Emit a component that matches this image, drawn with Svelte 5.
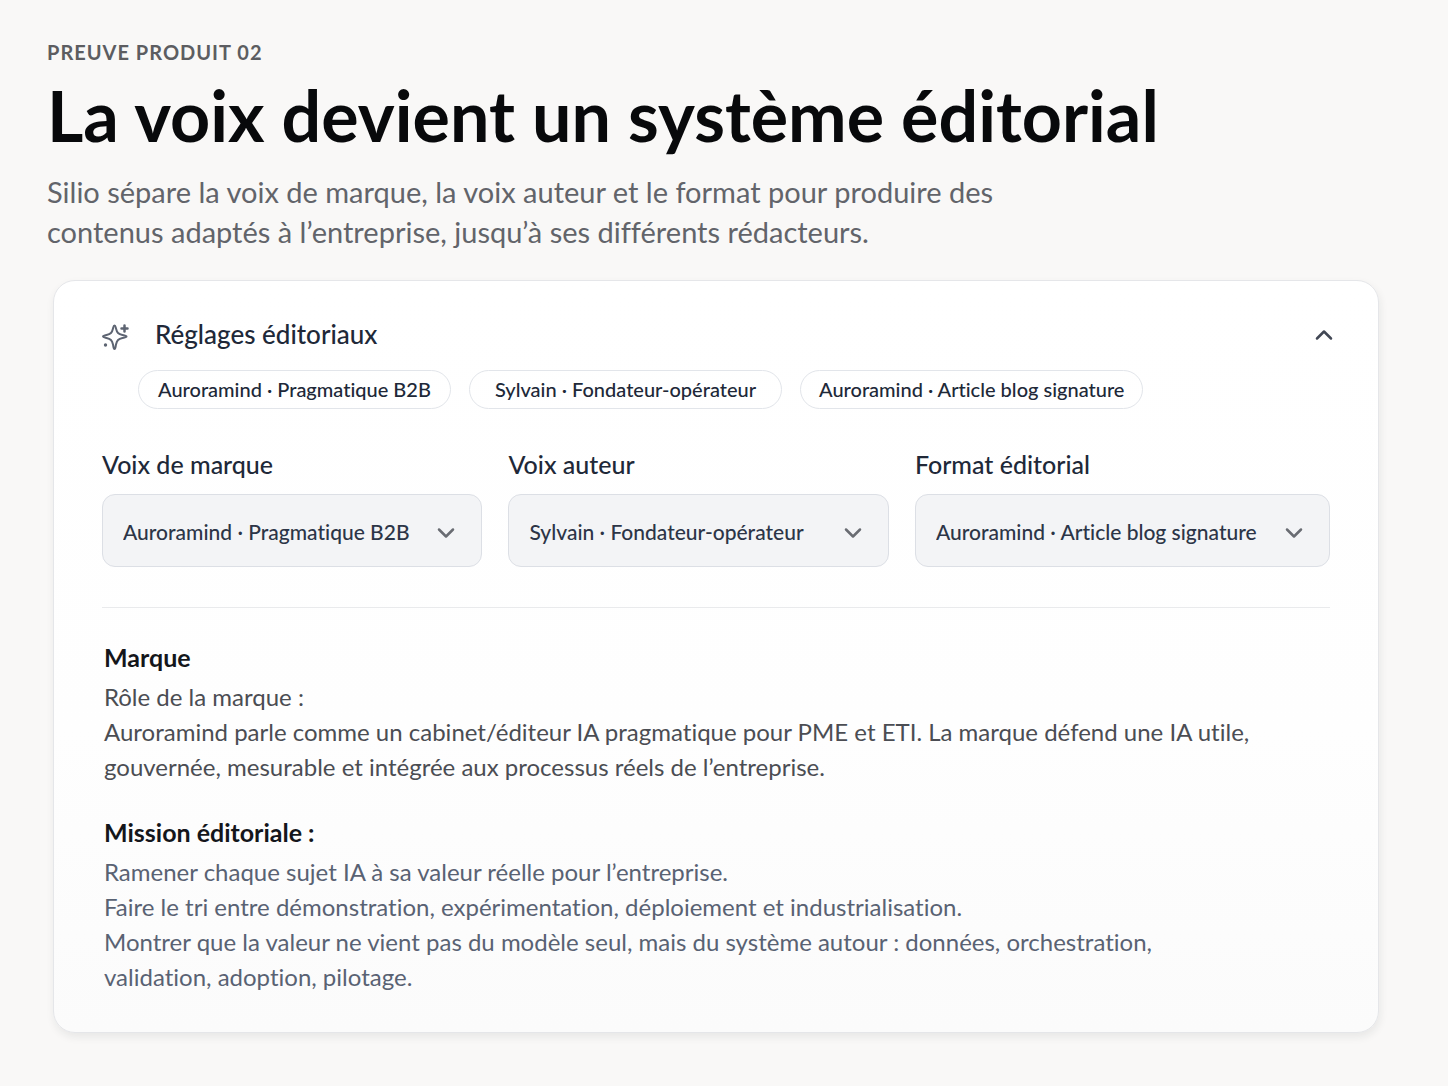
<script>
  let open = $state(true);

  const fields = [
    { id: 'brand', label: 'Voix de marque', value: 'Auroramind · Pragmatique B2B' },
    { id: 'author', label: 'Voix auteur', value: 'Sylvain · Fondateur-opérateur' },
    { id: 'format', label: 'Format éditorial', value: 'Auroramind · Article blog signature' },
  ];
</script>

<main class="page">
  <header class="intro">
    <p class="eyebrow">PREUVE PRODUIT 02</p>
    <h1>La voix devient un système éditorial</h1>
    <p class="lead">
      Silio sépare la voix de marque, la voix auteur et le format pour produire des
      contenus adaptés à l’entreprise, jusqu’à ses différents rédacteurs.
    </p>
  </header>

  <section class="card">
    <div class="card-header">
      <svg class="sparkle" viewBox="0 0 28 32" aria-hidden="true">
        <path class="star" d="M12.500 7.500c1 0 1.100 1.400 1.500 3 1 4.300 2.300 5.500 6.500 6.500 1.800.4 4 .6 4 1.500s-2.200 1.100-4 1.500c-4.200 1-5.500 2.200-6.500 6.500-.4 1.700-.5 4.500-1.500 4.500s-1.100-2.800-1.500-4.500c-1-4.300-2.300-5.500-6.500-6.500-1.600-.4-3.500-.6-3.500-1.500s1.900-1.100 3.500-1.500c4.200-1 5.500-2.200 6.500-6.500.4-1.600.5-3 1.500-3z" />
        <path class="plus" d="M22.500 7.500v6M19.500 10.500h6" />
        <circle cx="3.500" cy="27" r="1.700" />
      </svg>
      <h2>Réglages éditoriaux</h2>
      <button class="toggle" type="button" aria-label="Réglages éditoriaux" aria-expanded={open} onclick={() => (open = !open)}>
        <svg class:closed={!open} viewBox="0 0 20 20" aria-hidden="true"><path d="M3 14.500l7-7 7 7" /></svg>
      </button>
    </div>

    <ul class="chips">
      {#each fields as field}
        <li>{field.value}</li>
      {/each}
    </ul>

    {#if open}
      <div class="fields">
        {#each fields as field}
          <div class="field">
            <label for={field.id}>{field.label}</label>
            <div class="select-wrap">
              <select id={field.id}>
                <option>{field.value}</option>
              </select>
              <svg viewBox="0 0 20 20" aria-hidden="true"><path d="M3 8.500l7 7 7-7" /></svg>
            </div>
          </div>
        {/each}
      </div>

      <div class="details">
        <h3>Marque</h3>
        <p>
          Rôle de la marque :<br />
          Auroramind parle comme un cabinet/éditeur IA pragmatique pour PME et ETI. La marque défend une IA utile,
          gouvernée, mesurable et intégrée aux processus réels de l’entreprise.
        </p>

        <h3>Mission éditoriale :</h3>
        <p class="mission">
          Ramener chaque sujet IA à sa valeur réelle pour l’entreprise.<br />
          Faire le tri entre démonstration, expérimentation, déploiement et industrialisation.<br />
          Montrer que la valeur ne vient pas du modèle seul, mais du système autour : données, orchestration,
          validation, adoption, pilotage.
        </p>
      </div>
    {/if}
  </section>
</main>

<style>
  :global(body) {
    margin: 0;
    background: #f9f8f7;
  }

  .page {
    padding: 40px 69px 53px 47px;
    font-family: Lato, "Open Sans", sans-serif;
    font-variant-ligatures: none;
    color: #202838;
  }

  h1,
  h2,
  h3,
  p {
    margin: 0;
  }

  .eyebrow {
    font-size: 20px;
    font-weight: 700;
    line-height: 24px;
    letter-spacing: 1px;
    color: #5c5d61;
  }

  h1 {
    margin-top: 11px;
    font-size: 70px;
    font-weight: 700;
    line-height: 80px;
    color: #08090b;
  }

  .lead {
    max-width: 1000px;
    margin-top: 17px;
    font-size: 29px;
    line-height: 40px;
    color: #62646a;
  }

  .card {
    margin: 28px 0 0 6px;
    padding: 35px 48px 38px;
    border: 1px solid #e5e6e9;
    border-radius: 22px;
    background: linear-gradient(#fff 0%, #fefefe 60%, #fbfbfb 100%);
    box-shadow: 1px 4px 8px rgba(30, 32, 40, 0.08);
  }

  .card-header {
    display: flex;
    align-items: center;
  }

  .sparkle {
    width: 28px;
    height: 32px;
    margin-right: 25px;
    fill: #5d6472;
  }

  .sparkle path {
    fill: none;
    stroke: #5d6472;
    stroke-width: 2;
    stroke-linecap: round;
    stroke-linejoin: round;
  }

  .sparkle .plus {
    stroke-width: 2.5;
  }

  h2 {
    font-size: 26px;
    font-weight: 500;
    line-height: 36px;
  }

  .toggle {
    display: flex;
    margin-left: auto;
    padding: 0;
    border: 0;
    background: none;
    cursor: pointer;
  }

  .toggle svg,
  .select-wrap svg {
    width: 20px;
    height: 20px;
    margin-right: -4px;
    fill: none;
    stroke: #414754;
    stroke-width: 2.5;
    stroke-linecap: round;
    stroke-linejoin: round;
  }

  .toggle svg.closed {
    transform: rotate(180deg);
  }

  .chips {
    display: flex;
    flex-wrap: wrap;
    gap: 18px;
    margin: 18px 0 0;
    padding: 0 0 0 36px;
    list-style: none;
  }

  .chips li {
    min-width: 275px;
    padding: 0 18px;
    border: 1px solid #e2e5ea;
    border-radius: 20px;
    font-size: 20px;
    font-weight: 500;
    line-height: 37px;
    text-align: center;
  }

  .fields {
    display: grid;
    grid-template-columns: 11fr 11fr 12fr;
    gap: 26px;
    margin-top: 40px;
  }

  .field label {
    display: block;
    margin-bottom: 15px;
    font-size: 25px;
    font-weight: 500;
    line-height: 30px;
  }

  .select-wrap {
    position: relative;
  }

  select {
    display: block;
    width: 100%;
    height: 73px;
    padding: 2px 60px 0 20px;
    border: 1px solid #dcdfe5;
    border-radius: 13px;
    appearance: none;
    background: #f3f4f6;
    color: #2c3547;
    font-family: inherit;
    font-size: 21px;
    font-weight: 500;
    font-variant-ligatures: none;
  }

  .select-wrap svg {
    position: absolute;
    top: 50%;
    right: 30px;
    transform: translateY(-50%);
    stroke: #696c72;
    pointer-events: none;
  }

  .details {
    margin-top: 40px;
    padding-top: 31px;
    border-top: 1px solid #e9eaec;
  }

  .details h3 {
    padding-left: 2px;
    font-size: 25px;
    font-weight: 700;
    line-height: 36px;
    color: #14161b;
  }

  .details p {
    margin-top: 4px;
    padding-left: 2px;
    font-size: 24px;
    line-height: 35px;
    color: #4b4d53;
  }

  .details p + h3 {
    margin-top: 30px;
  }

  .details .mission {
    max-width: 1080px;
    color: #596273;
  }
</style>
